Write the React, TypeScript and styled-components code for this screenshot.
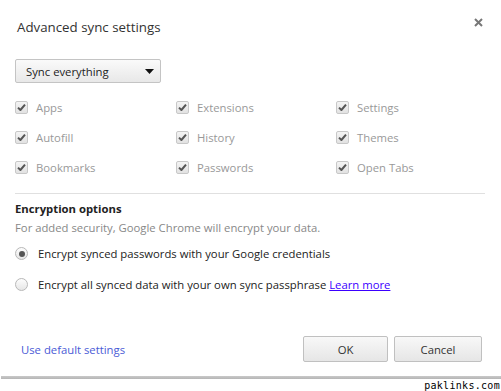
import styled, { createGlobalStyle } from "styled-components";

const GlobalStyle = createGlobalStyle`
    html, body {
        margin: 0;
        padding: 0;
        background: #ffffff;
    }
    body {
        font-family: "Open Sans", "Noto Sans", sans-serif;
        color: #333333;
    }
`;

const syncItems = [
    ["Apps", "Extensions", "Settings"],
    ["Autofill", "History", "Themes"],
    ["Bookmarks", "Passwords", "Open Tabs"],
];

const CheckBox = () => (
    <StyledBox>
        <svg width="9" height="9" viewBox="0 0 9 9">
            <path d="M1 4.6 L3.4 7 L8 1.6" fill="none" stroke="#555" strokeWidth="2" strokeLinejoin="round" />
        </svg>
    </StyledBox>
);

const Radio = ({ checked }: { checked?: boolean }) => (
    <StyledRadio>{checked && <RadioDot />}</StyledRadio>
);

const App = () => {
    return (
        <>
            <GlobalStyle />
            <StyledPage>
                <StyledDialog>
                    <StyledHeader>
                        <StyledTitle>Advanced sync settings</StyledTitle>
                        <StyledClose aria-label="close">
                            <svg width="9" height="9" viewBox="0 0 9 9">
                                <path d="M1 1 L8 8 M8 1 L1 8" stroke="#777" strokeWidth="2" />
                            </svg>
                        </StyledClose>
                    </StyledHeader>

                    <StyledSelect>
                        <span>Sync everything</span>
                        <svg width="9" height="5" viewBox="0 0 9 5">
                            <path d="M0 0 H9 L4.5 5 Z" fill="#111" />
                        </svg>
                    </StyledSelect>

                    <StyledGrid>
                        {syncItems.flat().map((label) => (
                            <StyledItem key={label}>
                                <CheckBox />
                                <span>{label}</span>
                            </StyledItem>
                        ))}
                    </StyledGrid>

                    <StyledDivider />

                    <StyledSectionTitle>Encryption options</StyledSectionTitle>
                    <StyledDesc>For added security, Google Chrome will encrypt your data.</StyledDesc>

                    <StyledRadios>
                        <StyledRadioRow>
                            <Radio checked />
                            <span>Encrypt synced passwords with your Google credentials</span>
                        </StyledRadioRow>
                        <StyledRadioRow>
                            <Radio />
                            <span>
                                Encrypt all synced data with your own sync passphrase <a href="#learn">Learn more</a>
                            </span>
                        </StyledRadioRow>
                    </StyledRadios>

                    <StyledFooter>
                        <StyledLink href="#default">Use default settings</StyledLink>
                        <StyledButtons>
                            <StyledButton $width={85}>OK</StyledButton>
                            <StyledButton $width={88}>Cancel</StyledButton>
                        </StyledButtons>
                    </StyledFooter>
                </StyledDialog>
                <StyledShadow />
                <StyledWatermark>paklinks.com</StyledWatermark>
            </StyledPage>
        </>
    );
};

const StyledPage = styled.div`
    width: 501px;
    height: 391px;
    overflow: hidden;
    display: flex;
    flex-direction: column;
`;

const StyledDialog = styled.div`
    padding: 0 16px 0 15px;
    height: 376px;
    box-sizing: border-box;
    display: flex;
    flex-direction: column;
`;

const StyledHeader = styled.div`
    display: flex;
    justify-content: space-between;
    align-items: flex-start;
    padding-top: 17px;
    height: 42px;
    box-sizing: border-box;
`;

const StyledTitle = styled.div`
    font-size: 13.3px;
    line-height: 20px;
    padding-left: 2px;
    color: #333;
`;

const StyledClose = styled.div`
    width: 9px;
    height: 9px;
    margin-top: 1px;
    margin-right: 2px;
    display: flex;
`;

const StyledSelect = styled.div`
    width: 146px;
    height: 24px;
    box-sizing: border-box;
    border: 1px solid #c4c4c4;
    border-radius: 2px;
    background: linear-gradient(#fafafa, #e8e8e8);
    display: flex;
    align-items: center;
    justify-content: space-between;
    padding: 0 6px 0 10px;
    margin-top: 17px;
    font-size: 11.3px;
    color: #222;
`;

const StyledGrid = styled.div`
    display: grid;
    grid-template-columns: 161px 160px 1fr;
    grid-auto-rows: 30px;
    margin-top: 9px;
`;

const StyledItem = styled.div`
    display: flex;
    align-items: center;
    gap: 8px;
    font-size: 11.3px;
    color: #999;
`;

const StyledBox = styled.div`
    width: 13px;
    height: 13px;
    box-sizing: border-box;
    border: 1px solid #c8c8c8;
    border-radius: 2px;
    background: linear-gradient(#f4f4f4, #e2e2e2);
    display: flex;
    align-items: center;
    justify-content: center;
`;

const StyledDivider = styled.div`
    height: 1px;
    background: #e0e0e0;
    margin-top: 11px;
`;

const StyledSectionTitle = styled.div`
    font-size: 11.3px;
    font-weight: bold;
    color: #222;
    margin-top: 7px;
    line-height: 16px;
`;

const StyledDesc = styled.div`
    font-size: 11.3px;
    color: #888;
    margin-top: 3px;
    line-height: 16px;
`;

const StyledRadios = styled.div`
    margin-top: 2px;
    display: flex;
    flex-direction: column;
`;

const StyledRadioRow = styled.div`
    display: flex;
    align-items: center;
    gap: 10px;
    font-size: 11.3px;
    color: #222;
    height: 31px;
    a {
        color: #3b00ff;
    }
`;

const StyledRadio = styled.div`
    width: 13px;
    height: 13px;
    box-sizing: border-box;
    border: 1px solid #b8b8b8;
    border-radius: 50%;
    background: linear-gradient(#fdfdfd, #e6e6e6);
    display: flex;
    align-items: center;
    justify-content: center;
`;

const RadioDot = styled.div`
    width: 6px;
    height: 6px;
    border-radius: 50%;
    background: #555;
`;

const StyledFooter = styled.div`
    margin-top: auto;
    margin-bottom: 14px;
    display: flex;
    align-items: center;
    justify-content: space-between;
`;

const StyledLink = styled.a`
    font-size: 11.3px;
    color: #4a5bd6;
    text-decoration: none;
    padding-left: 6px;
`;

const StyledButtons = styled.div`
    display: flex;
    gap: 6px;
    margin-right: 3px;
`;

const StyledButton = styled.button<{ $width: number }>`
    width: ${(p) => p.$width}px;
    height: 26px;
    border: 1px solid #c0c0c0;
    border-radius: 2px;
    background: linear-gradient(#f8f8f8, #e6e6e6);
    font-family: inherit;
    font-size: 11.3px;
    color: #333;
    padding: 0;
`;

const StyledShadow = styled.div`
    height: 3px;
    margin-left: 1px;
    background: linear-gradient(#c9c9c9, #b5b5b5);
`;

const StyledWatermark = styled.div`
    font-family: "DejaVu Sans Mono", monospace;
    font-size: 10px;
    letter-spacing: 0.3px;
    text-align: right;
    padding-right: 1px;
    line-height: 11px;
    margin-top: 1px;
    color: #000;
`;

export default App;
